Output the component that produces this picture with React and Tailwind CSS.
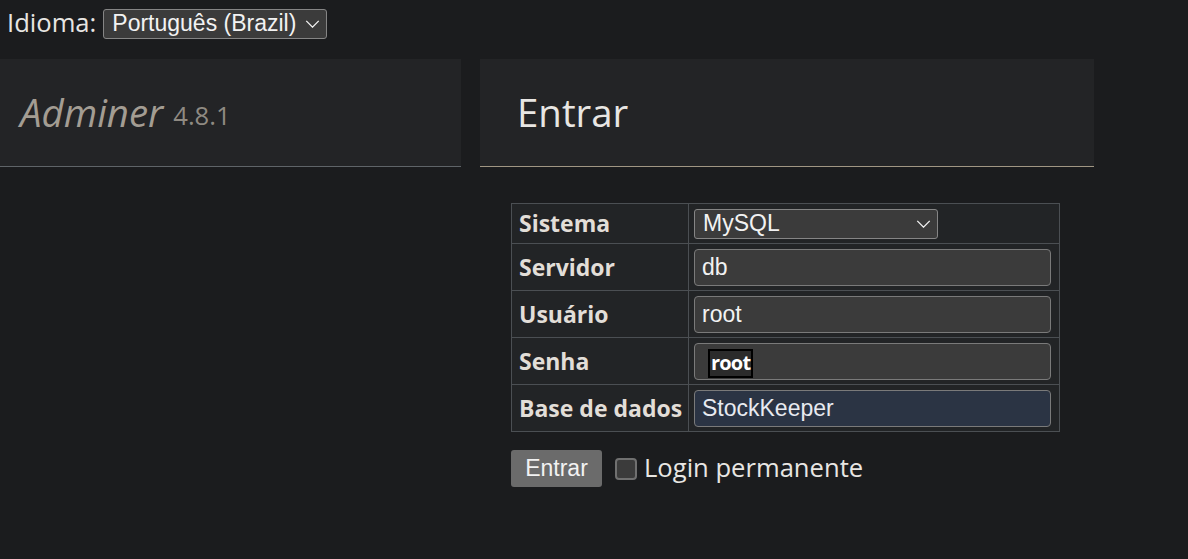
import React from 'react';

const sans = "font-['Open_Sans','Noto_Sans',sans-serif]";
const ctl = "font-['Liberation_Sans',Arial,sans-serif]";

function Chevron({ className }) {
  return (
    <svg viewBox="0 0 16 9" className={className} fill="none" stroke="currentColor" strokeWidth="1.5">
      <polyline points="1,1 8,8 15,1" />
    </svg>
  );
}

function Select({ value, className }) {
  return (
    <div
      className={`${ctl} flex items-center justify-between bg-[#3b3b3b] border border-[#858585] rounded-[3px] text-[23px] text-[#f2f2f2] pl-[8px] pr-[6px] h-[30px] ${className}`}
    >
      <span className="leading-none">{value}</span>
      <Chevron className="w-[15px] h-[8px] text-[#f2f2f2]" />
    </div>
  );
}

function TextInput({ value, autofill, children }) {
  return (
    <div
      className={`${ctl} relative flex items-center h-[37px] w-[357px] rounded-[4px] border border-[#7a7a7a] text-[23px] pl-[7px] ${
        autofill ? 'bg-[#2b3444] text-[#e8eaf0]' : 'bg-[#3b3b3b] text-[#f2f2f2]'
      }`}
    >
      {value}
      {children}
    </div>
  );
}

const rows = [
  { label: 'Servidor', value: 'db' },
  { label: 'Usuário', value: 'root' },
  { label: 'Senha', value: '', pass: true },
  { label: 'Base de dados', value: 'StockKeeper', autofill: true },
];

const cell = 'border border-[#4b4f53]';
const label = `${cell} text-left font-bold pl-[7px] pr-0 text-[23px] text-[#e2ded8] leading-none whitespace-nowrap`;

export default function App() {
  return (
    <div className={`${sans} min-h-[559px] w-full bg-[#1b1c1e] text-[#e8e6e3] text-[25.6px]`}>
      <div className="flex items-center h-[46px] pl-[7px] pt-[1px]">
        <span className="mr-[7px]">Idioma:</span>
        <Select value="Português (Brazil)" className="w-[224px]" />
      </div>

      <div className="flex gap-[19px] mt-[13px]">
        <div className="w-[461px] h-[108px] bg-[#232426] border-b border-[#5f6468] flex items-center pl-[20px]">
          <span className="italic text-[38.4px] text-[#a39d93] leading-none">Adminer</span>
          <span className="text-[25.6px] text-[#8f8a82] ml-[10px] mt-[8px]">4.8.1</span>
        </div>

        <div className="flex flex-col w-[614px]">
          <div className="h-[108px] bg-[#232426] border-b border-[#a09683] flex items-center pl-[37px]">
            <span className="text-[38.4px] text-[#e8e6e3] leading-none">Entrar</span>
          </div>

          <div className="pl-[31px] pt-[36px]">
            <table className="border-collapse bg-[#222426] table-fixed w-[548px]">
              <colgroup>
                <col className="w-[177px]" />
                <col className="w-[371px]" />
              </colgroup>
              <tbody>
                <tr className="h-[40px]">
                  <th className={label}>Sistema</th>
                  <td className={`${cell} pl-[5px] pr-[6px] align-middle`}>
                    <Select value="MySQL" className="w-[244px]" />
                  </td>
                </tr>
                {rows.map((r) => (
                  <tr key={r.label} className="h-[47px]">
                    <th className={label}>{r.label}</th>
                    <td className={`${cell} pl-[5px] pr-[6px] align-middle`}>
                      <TextInput value={r.value} autofill={r.autofill}>
                        {r.pass && (
                          <span
                            className={`${sans} absolute left-[13px] top-[5px] h-[29px] px-[1px] flex items-center bg-[#2b2b2b] border-2 border-black text-white font-bold text-[20px] leading-none tracking-[-0.8px]`}
                          >
                            root
                          </span>
                        )}
                      </TextInput>
                    </td>
                  </tr>
                ))}
              </tbody>
            </table>

            <div className="flex items-center mt-[18px]">
              <button
                className={`${ctl} h-[37px] w-[91px] bg-[#6b6b6b] rounded-[3px] text-[23px] text-[#f2f2f2]`}
              >
                Entrar
              </button>
              <span className="ml-[13px] w-[22px] h-[22px] rounded-[4px] bg-[#3b3b3b] border-2 border-[#707070]" />
              <span className="ml-[7px] leading-none mb-[2px]">Login permanente</span>
            </div>
          </div>
        </div>
      </div>
    </div>
  );
}
